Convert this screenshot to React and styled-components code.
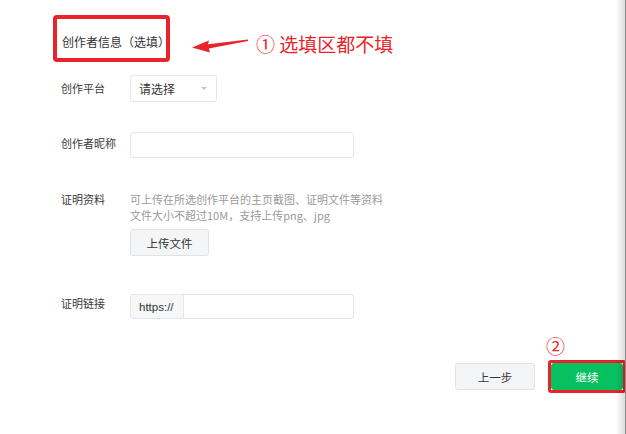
import React from "react";
import styled, { createGlobalStyle } from "styled-components";

const GlobalStyle = createGlobalStyle`
  html, body {
    margin: 0;
    padding: 0;
    background: #ffffff;
  }
  body {
    font-family: "Noto Sans CJK SC", "Noto Sans", "Liberation Sans", sans-serif;
    color: #353535;
  }
`;

const RED = "#e8232a";

const Page = styled.div`
  position: relative;
  width: 626px;
  height: 434px;
  overflow: hidden;
  background: #ffffff;
  box-sizing: border-box;
  padding: 15px 0 0 53px;
  display: flex;
  flex-direction: column;
`;

const EdgeShadow = styled.div`
  position: absolute;
  top: 0;
  right: 0;
  width: 9px;
  height: 100%;
  background: linear-gradient(to right, rgba(0, 0, 0, 0) 0%, rgba(0, 0, 0, 0.12) 85%);
  border-right: 1px solid #8d8d8d;
  pointer-events: none;
`;

const Header = styled.div`
  display: flex;
  align-items: center;
`;

const MarkBox = styled.div`
  box-sizing: border-box;
  width: 117px;
  height: 47px;
  border: 4px solid ${RED};
  border-radius: 4px;
  padding: 14px 0 0 5px;
`;

const Title = styled.div`
  font-size: 12px;
  letter-spacing: 0;
  line-height: 18px;
  color: #333333;
  white-space: nowrap;
`;

const ArrowMark = styled.svg`
  margin: 14px 0 0 20px;
  flex: none;
`;

const Note = styled.div`
  margin: 10px 0 0 6px;
  font-size: 19px;
  line-height: 24px;
  color: ${RED};
  white-space: nowrap;
`;

const Form = styled.div`
  padding-left: 8px;
  display: flex;
  flex-direction: column;
`;

const Row = styled.div`
  display: flex;
  align-items: flex-start;
  margin-top: ${(p) => p.$top}px;
`;

const Label = styled.div`
  width: 69px;
  flex: none;
  font-size: 11px;
  line-height: 16px;
  padding-top: ${(p) => p.$pad}px;
  color: #3a3a3a;
`;

const Select = styled.div`
  box-sizing: border-box;
  width: 87px;
  height: 27px;
  border: 1px solid #e6e6e6;
  border-radius: 3px;
  display: flex;
  align-items: center;
  justify-content: space-between;
  padding: 0 9px 0 8px;
  font-size: 12px;
  color: #353535;
`;

const Caret = styled.span`
  width: 0;
  height: 0;
  border-left: 3px solid transparent;
  border-right: 3px solid transparent;
  border-top: 3px solid #c4c4c4;
`;

const Input = styled.div`
  box-sizing: border-box;
  width: 224px;
  height: ${(p) => p.$h || 26}px;
  border: 1px solid #e6e6e6;
  border-radius: 3px;
  display: flex;
  overflow: hidden;
`;

const Prefix = styled.div`
  width: 53px;
  flex: none;
  background: #f6f7f8;
  border-right: 1px solid #e6e6e6;
  display: flex;
  align-items: center;
  padding-left: 8px;
  box-sizing: border-box;
  font-family: "Liberation Sans", "Noto Sans", sans-serif;
  font-size: 11.5px;
  color: #353535;
`;

const Column = styled.div`
  display: flex;
  flex-direction: column;
  align-items: flex-start;
`;

const Hint = styled.div`
  font-size: 11px;
  line-height: 16px;
  color: #9a9a9a;
  white-space: nowrap;
`;

const Button = styled.button`
  box-sizing: border-box;
  width: ${(p) => p.$w}px;
  height: 27px;
  margin-top: ${(p) => p.$top || 0}px;
  border: 1px solid ${(p) => (p.$primary ? "#07c160" : "#e2e2e2")};
  border-radius: 3px;
  background: ${(p) => (p.$primary ? "#07c160" : "#f4f5f6")};
  color: ${(p) => (p.$primary ? "#ffffff" : "#353535")};
  font-family: inherit;
  font-size: 11.5px;
  padding: 0;
  cursor: pointer;
`;

const Footer = styled.div`
  margin-top: 41px;
  display: flex;
  justify-content: flex-end;
  align-items: center;
  gap: 13px;
`;

const MarkWrap = styled.div`
  position: relative;
  border: 3px solid ${RED};
  border-radius: 3px;
  display: flex;
`;

const StepMark = styled.span`
  position: absolute;
  left: -5px;
  top: -28px;
  font-size: 19px;
  line-height: 22px;
  color: ${RED};
`;

export default function App() {
  return (
    <>
      <GlobalStyle />
      <Page>
        <Header>
          <MarkBox>
            <Title>创作者信息（选填）</Title>
          </MarkBox>
          <ArrowMark width="60" height="16" viewBox="0 0 60 16">
            <path d="M58 1.5 L18 6.2 L19 2.5 L2 9.5 L20 14.5 L18.8 10.6 L58 3 Z" fill={RED} />
          </ArrowMark>
          <Note>① 选填区都不填</Note>
        </Header>

        <Form>
          <Row $top={13}>
            <Label $pad={5}>创作平台</Label>
            <Select>
              请选择
              <Caret />
            </Select>
          </Row>

          <Row $top={30}>
            <Label $pad={3}>创作者昵称</Label>
            <Input />
          </Row>

          <Row $top={33}>
            <Label $pad={0}>证明资料</Label>
            <Column>
              <Hint>可上传在所选创作平台的主页截图、证明文件等资料</Hint>
              <Hint>文件大小不超过10M，支持上传png、jpg</Hint>
              <Button $w={79} $top={6}>上传文件</Button>
            </Column>
          </Row>

          <Row $top={38}>
            <Label $pad={1}>证明链接</Label>
            <Input $h={25}>
              <Prefix>https://</Prefix>
            </Input>
          </Row>
        </Form>

        <Footer>
          <Button $w={80}>上一步</Button>
          <MarkWrap>
            <StepMark>②</StepMark>
            <Button $w={72} $primary>继续</Button>
          </MarkWrap>
        </Footer>
        <EdgeShadow />
      </Page>
    </>
  );
}
